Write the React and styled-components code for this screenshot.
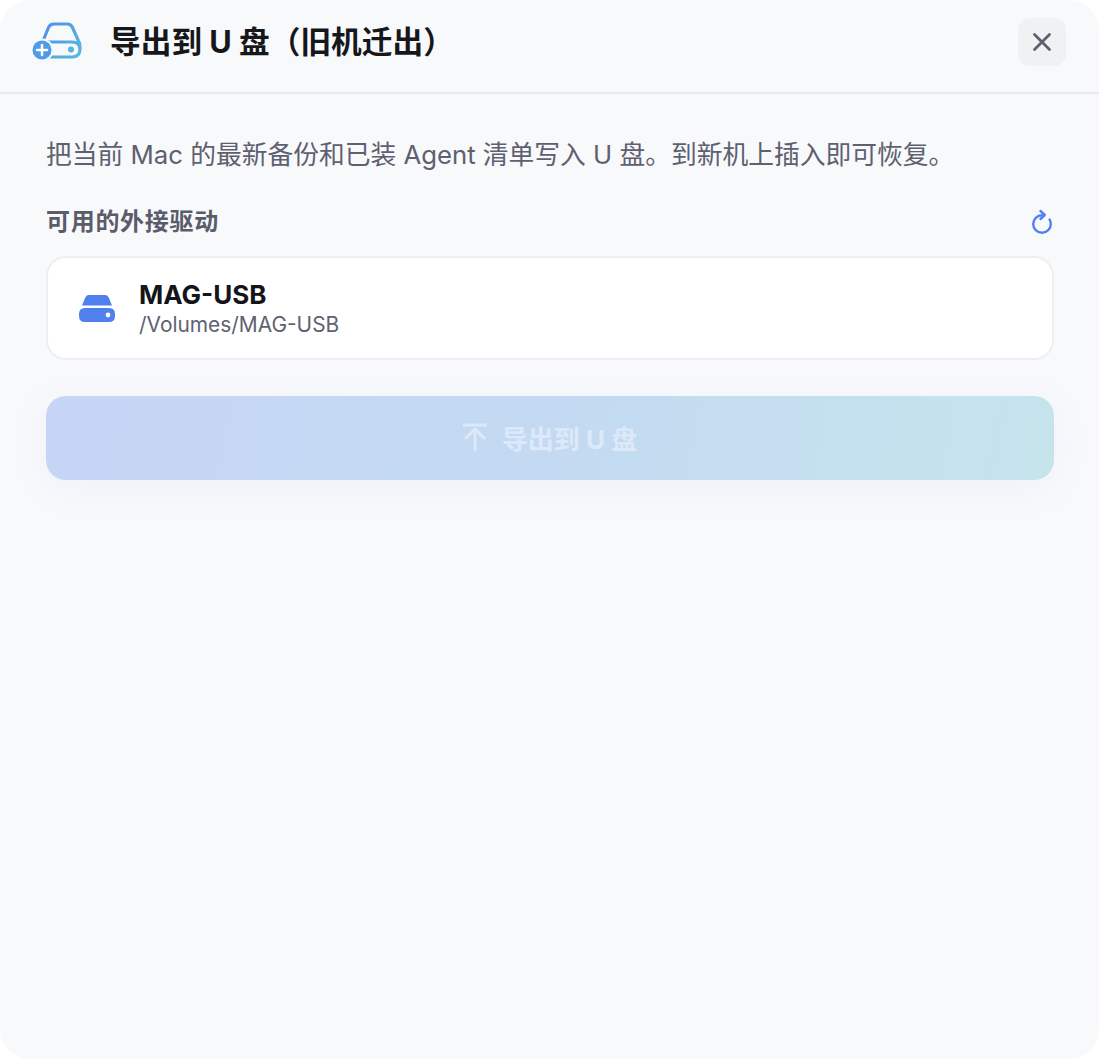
import React from "react";
import styled, { createGlobalStyle } from "styled-components";

const Global = createGlobalStyle`
  html, body { margin: 0; padding: 0; background: #ffffff; }
  body { font-family: Inter, "Noto Sans CJK SC", sans-serif; }
  * { box-sizing: border-box; }
`;

const Window = styled.div`
  width: 1099px;
  height: 1059px;
  background: #f8f9fb;
  border-radius: 30px;
  overflow: hidden;
  display: flex;
  flex-direction: column;
`;

const Header = styled.header`
  height: 94px;
  border-bottom: 2px solid #e8e9ed;
  display: flex;
  align-items: center;
  padding: 0 33px 8px 32px;
`;

const Title = styled.h1`
  margin: 0 0 0 28px;
  flex: 1;
  font-size: 30.7px;
  font-weight: 700;
  color: #16171b;
  line-height: 40px;
  white-space: pre;
`;

const CloseButton = styled.button`
  width: 48px;
  height: 48px;
  border: 0;
  border-radius: 12px;
  background: #f0f1f3;
  padding: 0;
  display: flex;
  align-items: center;
  justify-content: center;
`;

const Body = styled.main`
  padding: 40px 45px 0 46px;
  display: flex;
  flex-direction: column;
`;

const Description = styled.p`
  margin: 0;
  font-size: 25.75px;
  line-height: 42px;
  color: #5e6070;
  white-space: pre;
`;

const SectionRow = styled.div`
  margin-top: 28px;
  display: flex;
  align-items: center;
  justify-content: space-between;
  height: 36px;
`;

const SectionLabel = styled.h2`
  margin: 0;
  font-size: 24px;
  letter-spacing: 0.7px;
  font-weight: 600;
  color: #5a5c6b;
  line-height: 36px;
`;

const RefreshIcon = styled.svg`
  display: block;
`;

const DriveCard = styled.div`
  margin-top: 16px;
  height: 104px;
  background: #ffffff;
  border: 2px solid #eeeff2;
  border-radius: 20px;
  display: flex;
  align-items: center;
  padding: 0 0 0 30px;
  gap: 23px;
`;

const DriveText = styled.div`
  display: flex;
  flex-direction: column;
  padding-top: 2px;
`;

const DriveName = styled.div`
  font-size: 26px;
  font-weight: 700;
  line-height: 32px;
  color: #14151a;
`;

const DrivePath = styled.div`
  font-size: 20.9px;
  line-height: 28px;
  color: #5f6171;
`;

const ExportButton = styled.button`
  margin-top: 36px;
  height: 84px;
  border: 0;
  border-radius: 20px;
  background: linear-gradient(100deg, #c6d5f6 0%, #c3daf2 50%, #c6e4ec 100%);
  box-shadow: 0 8px 36px rgba(120, 150, 240, 0.08);
  display: flex;
  align-items: center;
  justify-content: center;
  gap: 15px;
  padding: 0 0 2px;
  color: #dde9f8;
  font-family: Inter, "Noto Sans CJK SC", sans-serif;
  font-size: 26px;
  font-weight: 700;
  white-space: pre;
`;

const DiskLogo = () => (
  <svg width="50" height="42" viewBox="0 0 50 42" fill="none">
    <defs>
      <linearGradient id="logoGrad" x1="0" y1="0" x2="50" y2="42" gradientUnits="userSpaceOnUse">
        <stop offset="0" stopColor="#4f86ee" />
        <stop offset="1" stopColor="#58bedd" />
      </linearGradient>
    </defs>
    <path
      d="M11 20 L16.5 6.5 Q18 3 22 3 H35 Q39 3 40.5 6.5 L46.5 20 Q48 22 48 26 V28 Q48 36 40 36 H16 M14 21 H40 Q48 21 48 29"
      stroke="url(#logoGrad)"
      strokeWidth="3.2"
      strokeLinejoin="round"
      strokeLinecap="round"
    />
    <circle cx="39" cy="28.5" r="3" fill="#55b5e2" />
    <circle cx="10" cy="29" r="11.5" fill="#f8f9fb" />
    <circle cx="10" cy="29" r="9.5" fill="#4f9be6" />
    <path d="M10 24 V34 M5 29 H15" stroke="#fff" strokeWidth="2.6" strokeLinecap="round" />
  </svg>
);

const CloseIcon = () => (
  <svg width="22" height="22" viewBox="0 0 22 22" fill="none">
    <path d="M3.5 3.5 L18.5 18.5 M18.5 3.5 L3.5 18.5" stroke="#5d5f6f" strokeWidth="2.8" strokeLinecap="round" />
  </svg>
);

const Refresh = () => (
  <RefreshIcon width="24" height="26" viewBox="0 0 24 26" fill="none">
    <path
      d="M12 6.2 A8.8 8.8 0 1 0 20.8 15 A8.8 8.8 0 0 0 19.6 10.6"
      stroke="#4f82ee"
      strokeWidth="2.4"
      strokeLinecap="round"
    />
    <path d="M10.5 2 L14.8 6 L10.5 10" stroke="#4f82ee" strokeWidth="2.4" strokeLinecap="round" strokeLinejoin="round" />
  </RefreshIcon>
);

const DriveIcon = () => (
  <svg width="38" height="28" viewBox="0 0 38 28" fill="none">
    <path d="M4 11.5 L7.5 3 Q8.5 1 11 1 H27 Q29.5 1 30.5 3 L34 11.5 Z" fill="#4f80ee" />
    <path d="M7 14 H31 Q37 14 37 20 V22 Q37 28 31 28 H7 Q1 28 1 22 V20 Q1 14 7 14 Z" fill="#4f80ee" />
    <circle cx="30" cy="21" r="2.4" fill="#fff" />
  </svg>
);

const UploadIcon = () => (
  <svg width="24" height="30" viewBox="0 0 24 30" fill="none">
    <path d="M1 3 H23 M12 7 V28 M12 7 L3 16 M12 7 L21 16" stroke="#dde9f8" strokeWidth="3" strokeLinecap="round" strokeLinejoin="round" />
  </svg>
);

export default function App() {
  return (
    <>
      <Global />
      <Window>
        <Header>
          <DiskLogo />
          <Title>导出到 U 盘（旧机迁出）</Title>
          <CloseButton aria-label="关闭">
            <CloseIcon />
          </CloseButton>
        </Header>
        <Body>
          <Description>把当前 Mac 的最新备份和已装 Agent 清单写入 U 盘。到新机上插入即可恢复。</Description>
          <SectionRow>
            <SectionLabel>可用的外接驱动</SectionLabel>
            <Refresh />
          </SectionRow>
          <DriveCard>
            <DriveIcon />
            <DriveText>
              <DriveName>MAG-USB</DriveName>
              <DrivePath>/Volumes/MAG-USB</DrivePath>
            </DriveText>
          </DriveCard>
          <ExportButton>
            <UploadIcon />
            导出到 U 盘
          </ExportButton>
        </Body>
      </Window>
    </>
  );
}
